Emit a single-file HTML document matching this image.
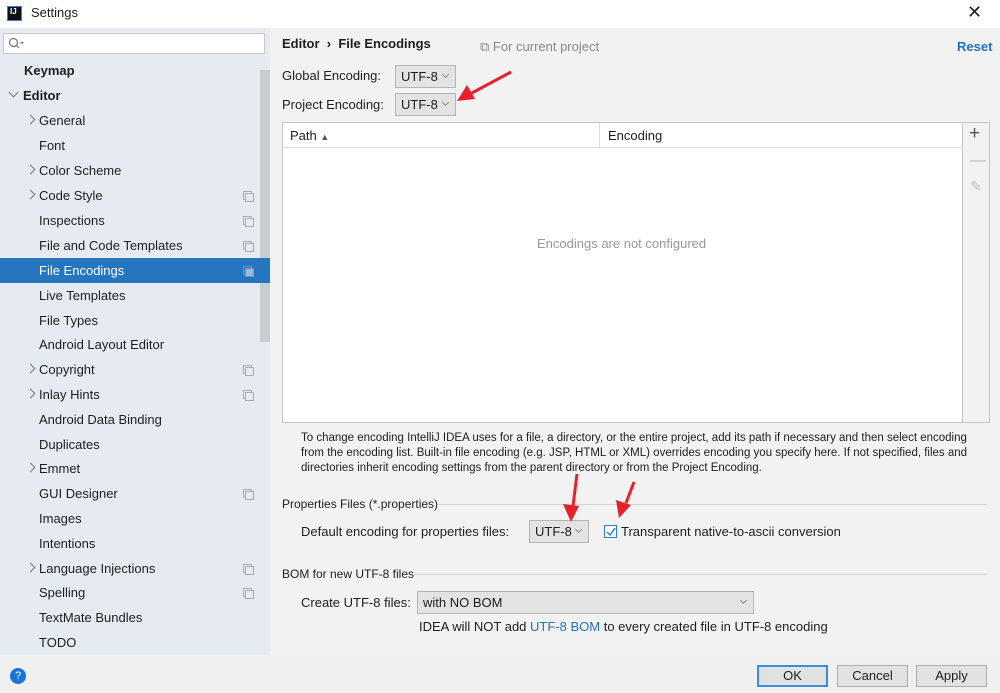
<!DOCTYPE html><html><head><style>
*{margin:0;padding:0;box-sizing:border-box}
body{width:1000px;height:693px;overflow:hidden;background:#f2f2f2;font-family:"Liberation Sans","DejaVu Sans",sans-serif;font-size:13px;color:#1e1e1e;position:relative}
.a{position:absolute;white-space:nowrap}
.side{position:absolute;left:0;top:28px;width:270px;height:627px;background:#e6ebf1}
.it{position:absolute;left:0;width:260px;height:25px;line-height:25px}
.it span{position:absolute}
.chev{position:absolute;left:27px;top:8px;width:7px;height:7px;border-right:1.3px solid #777;border-bottom:1.3px solid #777;transform:rotate(-45deg)}
.cp{position:absolute;left:243px;top:8px;width:10px;height:10px}
.cp:before,.cp:after{content:"";position:absolute;width:7px;height:7px;border:1px solid #aab}
.cp:before{left:0;top:0}.cp:after{left:2px;top:2px;background:#e6ebf1}
.combo{position:absolute;height:23px;border:1px solid #b4b4b4;background:#e3e3e3;line-height:21px;padding-left:5px}
.combo i{position:absolute;right:7px;top:6px;width:5px;height:5px;border-right:1px solid #888;border-bottom:1px solid #888;transform:rotate(45deg)}
.btn{position:absolute;top:665px;height:22px;border:1px solid #adadad;background:#e1e1e1;text-align:center;line-height:20px}
</style></head><body>
<div class="a" style="left:0;top:0;width:1000px;height:28px;background:#fff"></div>
<div class="a" style="left:7px;top:6px;width:15px;height:15px;background:#111;border:1px solid #3a7fd5;color:#fff;font-size:8px;font-weight:bold;line-height:9px;padding-left:2px">IJ</div>
<div class="a" style="left:31px;top:5px;font-size:13px">Settings</div>
<div class="a" style="left:967px;top:2px;font-size:18px;color:#222">✕</div>
<div class="side"></div>
<div class="a" style="left:3px;top:33px;width:262px;height:21px;background:#fff;border:1px solid #c8c8c8"></div>
<svg class="a" style="left:8px;top:37px" width="18" height="13"><circle cx="5.5" cy="5.5" r="4" fill="none" stroke="#777" stroke-width="1.2"/><line x1="8.5" y1="8.5" x2="11" y2="11" stroke="#777" stroke-width="1.2"/><path d="M12 5h4l-2 2z" fill="#777"/></svg>
<div class="a" style="left:260px;top:70px;width:10px;height:272px;background:#c9ccd1"></div>
<div class="it" style="top:58px;font-weight:bold"><span style="left:24px">Keymap</span></div>
<div class="it" style="top:83px;font-weight:bold"><div class="chev" style="left:10px;top:6px;transform:rotate(45deg)"></div><span style="left:23px">Editor</span></div>
<div class="it" style="top:108px"><div class="chev"></div><span style="left:39px">General</span></div>
<div class="it" style="top:133px"><span style="left:39px">Font</span></div>
<div class="it" style="top:158px"><div class="chev"></div><span style="left:39px">Color Scheme</span></div>
<div class="it" style="top:183px"><div class="chev"></div><span style="left:39px">Code Style</span><div class="cp"></div></div>
<div class="it" style="top:208px"><span style="left:39px">Inspections</span><div class="cp"></div></div>
<div class="it" style="top:233px"><span style="left:39px">File and Code Templates</span><div class="cp"></div></div>
<div class="it" style="top:258px;width:270px;background:#2675bf;color:#fff"><span style="left:39px">File Encodings</span><div class="cp" style="opacity:.6"></div></div>
<div class="it" style="top:283px"><span style="left:39px">Live Templates</span></div>
<div class="it" style="top:308px"><span style="left:39px">File Types</span></div>
<div class="it" style="top:332px"><span style="left:39px">Android Layout Editor</span></div>
<div class="it" style="top:357px"><div class="chev"></div><span style="left:39px">Copyright</span><div class="cp"></div></div>
<div class="it" style="top:382px"><div class="chev"></div><span style="left:39px">Inlay Hints</span><div class="cp"></div></div>
<div class="it" style="top:407px"><span style="left:39px">Android Data Binding</span></div>
<div class="it" style="top:432px"><span style="left:39px">Duplicates</span></div>
<div class="it" style="top:456px"><div class="chev"></div><span style="left:39px">Emmet</span></div>
<div class="it" style="top:481px"><span style="left:39px">GUI Designer</span><div class="cp"></div></div>
<div class="it" style="top:506px"><span style="left:39px">Images</span></div>
<div class="it" style="top:531px"><span style="left:39px">Intentions</span></div>
<div class="it" style="top:556px"><div class="chev"></div><span style="left:39px">Language Injections</span><div class="cp"></div></div>
<div class="it" style="top:580px"><span style="left:39px">Spelling</span><div class="cp"></div></div>
<div class="it" style="top:605px"><span style="left:39px">TextMate Bundles</span></div>
<div class="it" style="top:630px"><span style="left:39px">TODO</span></div>

<div class="a" style="left:282px;top:36px;font-weight:bold">Editor &nbsp;›&nbsp; File Encodings</div>
<div class="a" style="left:480px;top:39px;color:#888">⧉ For current project</div>
<div class="a" style="left:957px;top:39px;color:#2470c2;font-weight:bold">Reset</div>
<div class="a" style="left:282px;top:68px">Global Encoding:</div>
<div class="combo" style="left:395px;top:65px;width:61px">UTF-8<i></i></div>
<div class="a" style="left:282px;top:97px">Project Encoding:</div>
<div class="combo" style="left:395px;top:93px;width:61px">UTF-8<i></i></div>

<div class="a" style="left:282px;top:122px;width:681px;height:301px;background:#fff;border:1px solid #c4c4c4"></div>
<div class="a" style="left:282px;top:122px;width:681px;height:26px;border:1px solid #c4c4c4;border-bottom-color:#ddd"></div>
<div class="a" style="left:599px;top:123px;width:1px;height:24px;background:#ddd"></div>
<div class="a" style="left:290px;top:128px">Path <span style="font-size:9px;color:#555">▲</span></div>
<div class="a" style="left:608px;top:128px">Encoding</div>
<div class="a" style="left:537px;top:236px;color:#999">Encodings are not configured</div>
<div class="a" style="left:963px;top:122px;width:27px;height:301px;border:1px solid #c4c4c4;border-left:none;background:#f2f2f2"></div>
<div class="a" style="left:969px;top:123px;font-size:19px;color:#555">+</div>
<div class="a" style="left:970px;top:152px;font-size:16px;color:#bbb">—</div>
<div class="a" style="left:970px;top:178px;font-size:14px;color:#bbb">✎</div>

<div class="a" style="left:301px;top:431px;font-size:11.5px;line-height:15px">To change encoding IntelliJ IDEA uses for a file, a directory, or the entire project, add its path if necessary and then select encoding<br>from the encoding list. Built-in file encoding (e.g. JSP, HTML or XML) overrides encoding you specify here. If not specified, files and<br>directories inherit encoding settings from the parent directory or from the Project Encoding.</div>

<div class="a" style="left:282px;top:497px;font-size:12px">Properties Files (*.properties)</div>
<div class="a" style="left:437px;top:504px;width:550px;height:1px;background:#d5d5d5"></div>
<div class="a" style="left:301px;top:524px">Default encoding for properties files:</div>
<div class="combo" style="left:529px;top:520px;width:60px">UTF-8<i></i></div>
<div class="a" style="left:604px;top:525px;width:13px;height:13px;border:1px solid #2b7fd6;background:#fff"></div>
<svg class="a" style="left:605px;top:526px" width="12" height="12"><path d="M2 6l3 3 5-7" fill="none" stroke="#2b7fd6" stroke-width="1.5"/></svg>
<div class="a" style="left:621px;top:524px">Transparent native-to-ascii conversion</div>

<div class="a" style="left:282px;top:567px;font-size:12px">BOM for new UTF-8 files</div>
<div class="a" style="left:414px;top:574px;width:573px;height:1px;background:#d5d5d5"></div>
<div class="a" style="left:301px;top:595px">Create UTF-8 files:</div>
<div class="combo" style="left:417px;top:591px;width:337px">with NO BOM<i></i></div>
<div class="a" style="left:419px;top:619px">IDEA will NOT add <span style="color:#2470c2">UTF-8 BOM</span> to every created file in UTF-8 encoding</div>

<div class="a" style="left:0;top:655px;width:1000px;height:38px;background:#f0f0f0"></div>
<div class="a" style="left:10px;top:668px;width:16px;height:16px;border-radius:50%;background:#1874d8;color:#fff;font-size:11px;text-align:center;line-height:16px">?</div>
<div class="btn" style="left:757px;width:71px;border:2px solid #3c8ce0;line-height:18px">OK</div>
<div class="btn" style="left:837px;width:71px">Cancel</div>
<div class="btn" style="left:916px;width:71px">Apply</div>

<svg class="a" style="left:0;top:0" width="1000" height="693">
<g stroke="#e8202a" stroke-width="3" fill="#e8202a">
<line x1="511" y1="72" x2="470" y2="94"/><path d="M457 101l10-16 8 14z" stroke="none"/>
<line x1="577" y1="474" x2="573" y2="506"/><path d="M571 522l-8-18 16 2z" stroke="none"/>
<line x1="634" y1="482" x2="626" y2="503"/><path d="M619 518l-3-18 15 5z" stroke="none"/>
</g></svg>
</body></html>
